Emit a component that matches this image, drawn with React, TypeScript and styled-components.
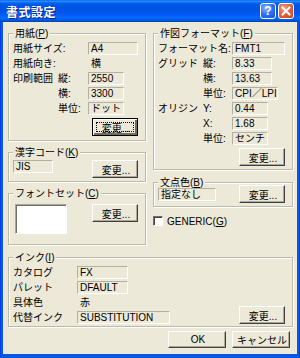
import React from 'react'
import styled, { createGlobalStyle } from 'styled-components'

const GlobalStyle = createGlobalStyle`
  * { box-sizing: border-box; }
  html, body { margin: 0; padding: 0; background: #ffffff; }
  body {
    font-family: "Liberation Sans", "Noto Sans CJK JP", sans-serif;
    font-size: 10px;
    color: #000000;
  }
`

const Window = styled.div`
  width: 300px;
  height: 358px;
  display: flex;
  flex-direction: column;
  background: linear-gradient(to right, #0831d9 0, #0a56e6 1px, #0a56e6 299px, #0831d9 300px);
`

const TitleBar = styled.div`
  height: 22px;
  flex: none;
  display: flex;
  align-items: center;
  gap: 2px;
  padding: 0 6px;
  background: linear-gradient(
    180deg,
    #0058ee 0%,
    #3593ff 5%,
    #127dff 9%,
    #0262ee 15%,
    #0057e5 22%,
    #0054e3 30%,
    #0055eb 56%,
    #005bf5 68%,
    #026afe 78%,
    #0062ef 88%,
    #0052d6 94%,
    #0040ab 100%
  );
`

const Title = styled.span`
  flex: 1;
  font-family: "Noto Sans CJK JP", sans-serif;
  font-weight: bold;
  font-size: 12px;
  color: #ffffff;
  text-shadow: 1px 1px 0 #0a1e8a;
  letter-spacing: 0.5px;
`

const CaptionButton = styled.div<{ $close?: boolean }>`
  width: 16px;
  height: 16px;
  border: 1px solid #ffffff;
  border-radius: 3px;
  display: flex;
  align-items: center;
  justify-content: center;
  color: #ffffff;
  font-family: "Liberation Sans", sans-serif;
  font-weight: bold;
  font-size: 12px;
  background: ${(p) =>
    p.$close
      ? 'radial-gradient(circle at 35% 30%, #f3a184 0%, #e4633f 45%, #c8421c 100%)'
      : 'radial-gradient(circle at 35% 30%, #8fb6ff 0%, #2f6ff2 50%, #1a4fd6 100%)'};
`

const Client = styled.div`
  flex: 1;
  margin: 0 3px 4px 3px;
  background: #ece9d8;
  padding: 6px 4px 0 5px;
  display: flex;
  flex-direction: column;
`

const Columns = styled.div`
  display: grid;
  grid-template-columns: 138px 140px;
  column-gap: 7px;
  height: 216px;
`

const Column = styled.div<{ $gap: number }>`
  display: flex;
  flex-direction: column;
  gap: ${(p) => p.$gap}px;
`

const Group = styled.fieldset<{ $h: number; $pt?: number }>`
  margin: 0;
  min-width: 0;
  height: ${(p) => p.$h}px;
  padding: ${(p) => p.$pt ?? 3}px 7px 0 4px;
  border: 1px solid #bdbaab;
  box-shadow: inset 1px 1px 0 #ffffff, 1px 1px 0 #ffffff;
`

const Legend = styled.legend`
  padding: 0 2px;
  margin-left: 0;
  height: 11px;
  line-height: 11px;
  background: #ece9d8;
  white-space: nowrap;
`

const Rows = styled.div`
  display: flex;
  flex-direction: column;
  gap: 2px;
`

const Row = styled.div<{ $lead: number; $sub: number }>`
  display: grid;
  grid-template-columns: ${(p) => p.$lead}px ${(p) => p.$sub}px auto;
  align-items: center;
  height: 13px;
`

const Label = styled.span<{ $span?: boolean }>`
  grid-column: ${(p) => (p.$span ? '1 / 3' : 'auto')};
  white-space: nowrap;
  line-height: 13px;
`

const Value = styled.span<{ $w?: number; $plain?: boolean; $mt?: number }>`
  grid-column: 3;
  display: block;
  width: ${(p) => (p.$w ? `${p.$w}px` : 'auto')};
  height: 13px;
  margin-top: ${(p) => p.$mt ?? 0}px;
  padding-left: 2px;
  line-height: 11px;
  white-space: nowrap;
  overflow: hidden;
  border: 1px solid;
  border-color: ${(p) =>
    p.$plain ? 'transparent' : '#b3b0a1 #ffffff #ffffff #b3b0a1'};
`

const Button = styled.button<{ $w?: number; $h?: number; $default?: boolean }>`
  flex: none;
  width: ${(p) => p.$w ?? 46}px;
  height: ${(p) => p.$h ?? 18}px;
  padding: 0 0 0 2px;
  font-family: "Liberation Sans", "Noto Sans CJK JP", sans-serif;
  font-size: 10px;
  color: #000000;
  background: #ece9d8;
  border: 1px solid;
  border-color: ${(p) =>
    p.$default ? '#000000' : '#ffffff #404040 #404040 #ffffff'};
  box-shadow: ${(p) =>
    p.$default
      ? 'inset 1px 1px 0 #ffffff, inset -2px -2px 0 #716f64'
      : 'inset -1px -1px 0 #aca899'};
  outline: ${(p) => (p.$default ? '1px dotted #000000' : 'none')};
  outline-offset: -5px;
`

const ButtonBar = styled.div`
  display: flex;
  justify-content: flex-end;
  margin-top: 3px;
`

const Between = styled.div<{ $mt?: number }>`
  display: flex;
  justify-content: space-between;
  align-items: flex-start;
  margin-top: ${(p) => p.$mt ?? 0}px;
`

const Sunken = styled.div`
  width: 52px;
  height: 30px;
  margin-left: 2px;
  background: #ffffff;
  border: 1px solid;
  border-color: #aca899 #ffffff #ffffff #aca899;
  box-shadow: inset 1px 1px 0 #716f64;
`

const CheckRow = styled.label`
  display: flex;
  align-items: center;
  gap: 4px;
  margin-top: 1px;
  height: 12px;
`

const CheckBox = styled.span`
  width: 10px;
  height: 10px;
  background: #ffffff;
  border: 1px solid;
  border-color: #716f64 #ffffff #ffffff #716f64;
  box-shadow: inset 1px 1px 0 #404040;
`

const InkSection = styled.div`
  margin-top: 8px;
`

const InkBody = styled.div`
  display: flex;
  justify-content: space-between;
  align-items: flex-end;
`

const Footer = styled.div`
  display: flex;
  justify-content: flex-end;
  gap: 6px;
  margin-top: 4px;
  padding-right: 3px;
`

type Line = { label?: string; sub?: string; value: string; w?: number; plain?: boolean }

const paperLines: Line[] = [
  { label: '用紙サイズ:', value: 'A4', w: 50 },
  { label: '用紙向き:', value: '横', plain: true },
  { label: '印刷範囲', sub: '縦:', value: '2550', w: 36 },
  { sub: '横:', value: '3300', w: 36 },
  { sub: '単位:', value: 'ドット', w: 36 },
]

const formatLines: Line[] = [
  { label: 'フォーマット名:', value: 'FMT1', w: 53 },
  { label: 'グリッド', sub: '縦:', value: '8.33', w: 40 },
  { sub: '横:', value: '13.63', w: 40 },
  { sub: '単位:', value: 'CPI／LPI', w: 46 },
  { label: 'オリジン', sub: 'Y:', value: '0.44', w: 36 },
  { sub: 'X:', value: '1.68', w: 36 },
  { sub: '単位:', value: 'センチ', w: 36 },
]

const inkLines: Line[] = [
  { label: 'カタログ', value: 'FX', w: 51 },
  { label: 'パレット', value: 'DFAULT', w: 51 },
  { label: '具体色', value: '赤', plain: true },
  { label: '代替インク', value: 'SUBSTITUTION', w: 93 },
]

const LineRows = ({ lines, lead, sub }: { lines: Line[]; lead: number; sub: number }) => (
  <Rows>
    {lines.map((l, i) => (
      <Row key={i} $lead={lead} $sub={sub}>
        {l.sub ? (
          <>
            <Label>{l.label ?? ''}</Label>
            <Label>{l.sub}</Label>
          </>
        ) : (
          <Label $span>{l.label}</Label>
        )}
        <Value $w={l.w} $plain={l.plain}>
          {l.value}
        </Value>
      </Row>
    ))}
  </Rows>
)

const App = () => (
  <>
    <GlobalStyle />
    <Window>
      <TitleBar>
        <Title>書式設定</Title>
        <CaptionButton>?</CaptionButton>
        <CaptionButton $close>
          <svg width="10" height="10" viewBox="0 0 10 10">
            <path d="M1.5 1.5 L8.5 8.5 M8.5 1.5 L1.5 8.5" stroke="#ffffff" strokeWidth="2" strokeLinecap="square" />
          </svg>
        </CaptionButton>
      </TitleBar>
      <Client>
        <Columns>
          <Column $gap={6}>
            <Group $h={113}>
              <Legend>
                用紙(<u>P</u>)
              </Legend>
              <LineRows lines={paperLines} lead={45} sub={30} />
              <ButtonBar>
                <Button $default>変更...</Button>
              </ButtonBar>
            </Group>
            <Group $h={35} $pt={2}>
              <Legend>
                漢字コード(<u>K</u>)
              </Legend>
              <Between>
                <Value $w={40}>JIS</Value>
                <Button>変更...</Button>
              </Between>
            </Group>
            <Group $h={57} $pt={5}>
              <Legend>
                フォントセット(<u>C</u>)
              </Legend>
              <Between>
                <Sunken />
                <Button>変更...</Button>
              </Between>
            </Group>
          </Column>
          <Column $gap={7}>
            <Group $h={142}>
              <Legend>
                作図フォーマット(<u>F</u>)
              </Legend>
              <LineRows lines={formatLines} lead={45} sub={29} />
              <ButtonBar>
                <Button>変更...</Button>
              </ButtonBar>
            </Group>
            <Group $h={30} $pt={0}>
              <Legend>
                文点色(<u>B</u>)
              </Legend>
              <Between $mt={-3}>
                <Value $w={58} $mt={3}>
                  指定なし
                </Value>
                <Button>変更...</Button>
              </Between>
            </Group>
            <CheckRow>
              <CheckBox />
              <span>
                GENERIC(<u>G</u>)
              </span>
            </CheckRow>
          </Column>
        </Columns>
        <InkSection>
          <Group $h={75}>
            <Legend>
              インク(<u>I</u>)
            </Legend>
            <InkBody>
              <LineRows lines={inkLines} lead={64} sub={0} />
              <Button>変更...</Button>
            </InkBody>
          </Group>
        </InkSection>
        <Footer>
          <Button $w={58} $h={17}>
            OK
          </Button>
          <Button $w={58} $h={17}>
            キャンセル
          </Button>
        </Footer>
      </Client>
    </Window>
  </>
)

export default App
